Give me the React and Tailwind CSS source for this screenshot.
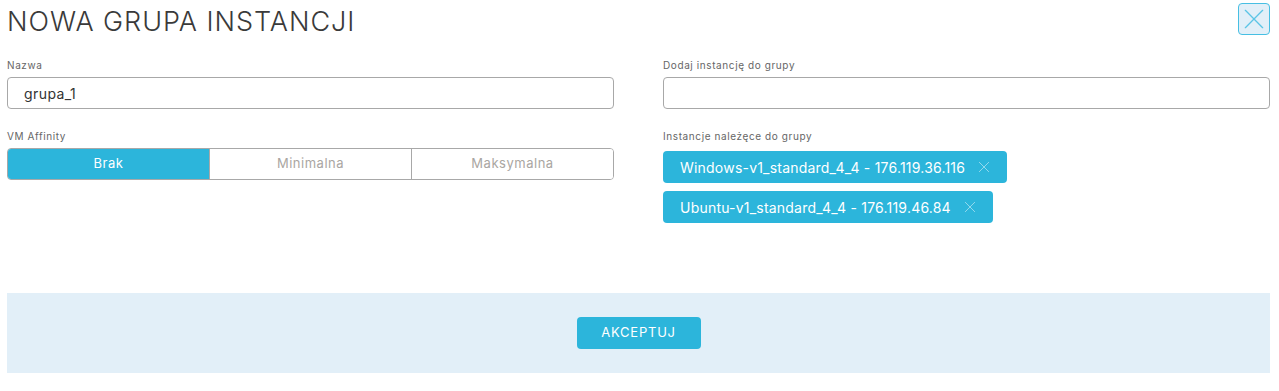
import React, { useState } from 'react';

const FONT = "font-['Inter','Liberation_Sans',sans-serif]";

const CloseIcon = ({ className }) => (
  <svg viewBox="0 0 24 24" className={className} fill="none" stroke="currentColor" strokeWidth="1.2" strokeLinecap="round">
    <path d="M4 4 L20 20 M20 4 L4 20" />
  </svg>
);

const Label = ({ children }) => (
  <label className="block text-[10px] tracking-[0.06em] text-[#666] mb-[5px] leading-[13px]">{children}</label>
);

const App = () => {
  const [name, setName] = useState('grupa_1');
  const [affinity, setAffinity] = useState('brak');
  const [instances, setInstances] = useState([
    'Windows-v1_standard_4_4 - 176.119.36.116',
    'Ubuntu-v1_standard_4_4 - 176.119.46.84',
  ]);

  const options = [
    { id: 'brak', label: 'Brak' },
    { id: 'min', label: 'Minimalna' },
    { id: 'max', label: 'Maksymalna' },
  ];

  return (
    <div className={`${FONT} w-[1279px] h-[391px] bg-white relative`}>
      <div className="flex items-start justify-between pl-[7px] pr-[9px] pt-[3px]">
        <h1 className="text-[27px] font-light tracking-[0.035em] text-[#3a3a3a] leading-[36px] mt-[1px]">NOWA GRUPA INSTANCJI</h1>
        <button className="w-[32px] h-[32px] rounded-[4px] border border-[#47bfe3] bg-[#e2eff8] text-[#5cc5e6] flex items-center justify-center">
          <CloseIcon className="w-[26px] h-[26px]" />
        </button>
      </div>

      <div className="grid grid-cols-2 gap-x-[49px] px-[7px] pr-[9px] mt-[19px]">
        <div>
          <Label>Nazwa</Label>
          <input
            value={name}
            onChange={(e) => setName(e.target.value)}
            className="w-full h-[32px] rounded-[4px] border border-[#a8a8a8] px-[16px] text-[14px] tracking-[0.03em] text-[#333] outline-none"
          />
        </div>
        <div>
          <Label>Dodaj instancję do grupy</Label>
          <input className="w-full h-[32px] rounded-[4px] border border-[#a8a8a8] px-[16px] text-[14px] outline-none" />
        </div>

        <div className="mt-[21px]">
          <Label>VM Affinity</Label>
          <div className="flex h-[32px] rounded-[4px] border border-[#a8a8a8] overflow-hidden">
            {options.map((o, i) => (
              <button
                key={o.id}
                onClick={() => setAffinity(o.id)}
                className={`flex-1 text-[13px] tracking-[0.04em] ${i > 0 ? 'border-l border-[#a8a8a8]' : ''} ${
                  affinity === o.id ? 'bg-[#2cb5db] text-white' : 'bg-white text-[#aaa6a2]'
                }`}
              >
                {o.label}
              </button>
            ))}
          </div>
        </div>
        <div className="mt-[21px]">
          <Label>Instancje należęce do grupy</Label>
          <div className="flex flex-col items-start gap-[8px] pt-[3px]">
            {instances.map((inst) => (
              <div
                key={inst}
                className="h-[32px] rounded-[4px] bg-[#2cb5db] text-white flex items-center pl-[17px] pr-[16px] text-[14px] tracking-[0.015em]"
              >
                <span>{inst}</span>
                <button
                  onClick={() => setInstances(instances.filter((x) => x !== inst))}
                  className="ml-[12px] text-[#bfe8f5]"
                >
                  <CloseIcon className="w-[14px] h-[14px]" />
                </button>
              </div>
            ))}
          </div>
        </div>
      </div>

      <div className="absolute left-[7px] right-[9px] top-[293px] h-[80px] bg-[#e2eff8] flex items-center justify-center">
        <button className="w-[124px] h-[32px] rounded-[4px] bg-[#2cb5db] text-white text-[13px] tracking-[0.06em]">
          AKCEPTUJ
        </button>
      </div>
    </div>
  );
};

export default App;
